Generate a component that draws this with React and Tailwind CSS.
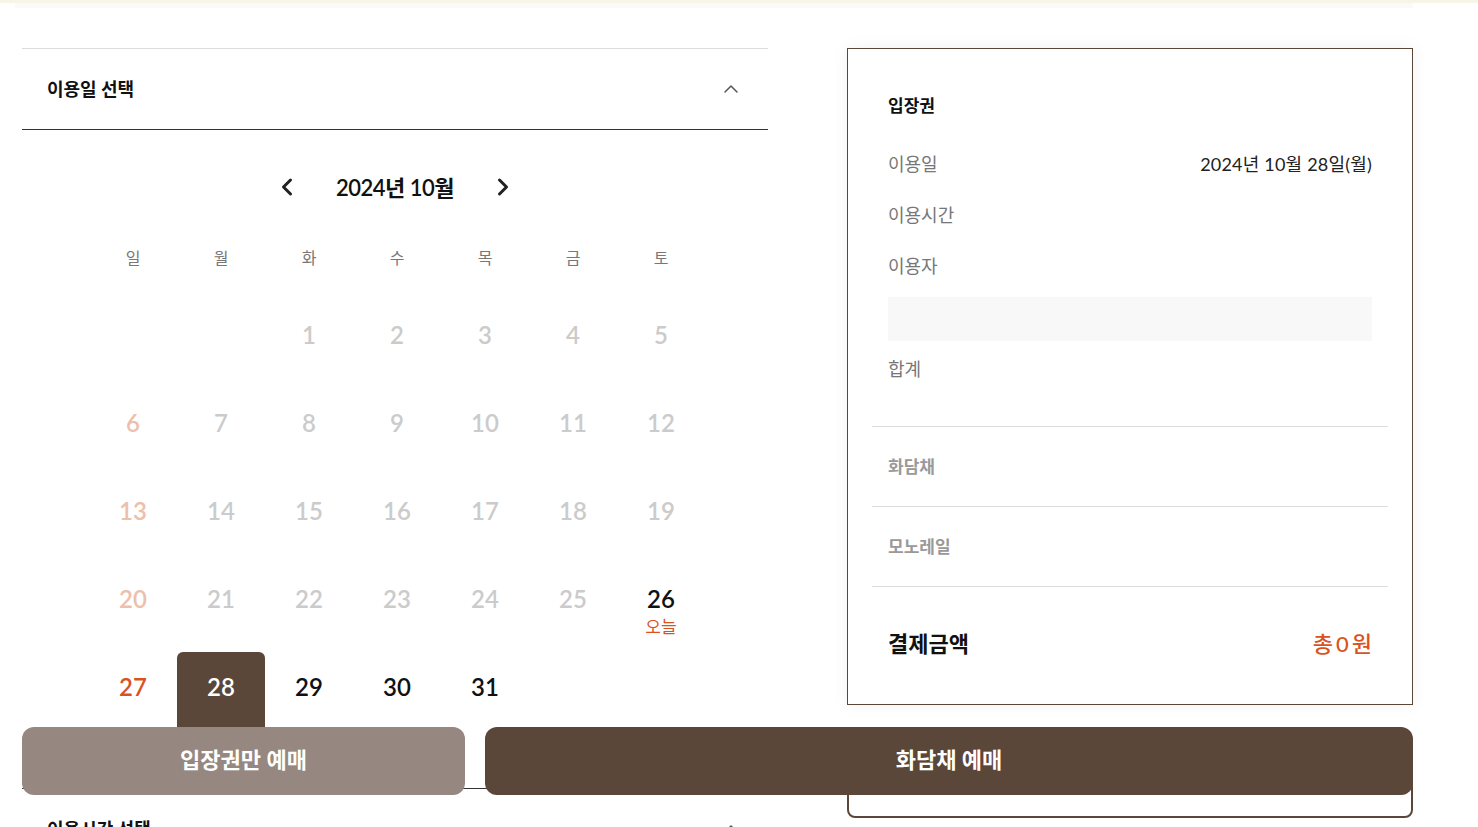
import { ChevronUp, ChevronLeft, ChevronRight } from 'lucide-react';

const WEEKDAYS = ['일', '월', '화', '수', '목', '금', '토'];

// October 2024 starts on Tuesday
const cells = [null, null, ...Array.from({ length: 31 }, (_, i) => i + 1)];

function dayColor(day, col) {
  if (day === 28) return 'text-white';
  if (day === 27) return 'text-[#d9531e]';
  if (day >= 26) return 'text-[#111]';
  if (col === 0) return 'text-[#ecc0aa]';
  return 'text-[#cbcbcb]';
}

function SectionHeader({ title }) {
  return (
    <div className="flex h-[80px] items-center justify-between pl-[25px] pr-[25px]">
      <h3 className="text-[18px] font-bold text-[#111]">{title}</h3>
      <ChevronUp size={24} strokeWidth={1.5} className="text-[#555]" />
    </div>
  );
}

function Calendar() {
  return (
    <div className="border-b border-[#333] pt-[37px] pb-[57px]">
      <div className="flex h-[40px] items-center justify-center gap-[30px]">
        <ChevronLeft size={28} strokeWidth={2.6} className="text-[#222]" />
        <span className="w-[128px] text-center text-[22px] font-semibold tracking-[-0.5px] text-[#111]">2024년 10월</span>
        <ChevronRight size={28} strokeWidth={2.6} className="text-[#222]" />
      </div>
      <div className="ml-[67px] mt-[39px] grid w-[616px] grid-cols-7">
        {WEEKDAYS.map((w) => (
          <div key={w} className="h-[24px] text-center text-[16px] leading-[24px] text-[#777]">{w}</div>
        ))}
      </div>
      <div className="ml-[67px] mt-[30px] grid w-[616px] grid-cols-7 gap-y-[9px]">
        {cells.map((day, i) => (
          <div
            key={i}
            className={
              'flex h-[79px] flex-col items-center pt-[21px] ' +
              (day === 28 ? 'rounded-t-[6px] bg-[#5a4739]' : '')
            }
          >
            {day && (
              <>
                <span className={'text-[24px] font-semibold leading-[28px] ' + dayColor(day, i % 7)}>{day}</span>
                {day === 26 && <span className="mt-[3px] text-[17px] leading-[22px] text-[#d9531e]">오늘</span>}
              </>
            )}
          </div>
        ))}
      </div>
    </div>
  );
}

function InfoRow({ label, value, className = '' }) {
  return (
    <div className={'flex h-[51px] items-center justify-between ' + className}>
      <span className="text-[18px] text-[#777]">{label}</span>
      {value && <span className="text-[18px] tracking-[0.2px] text-[#222]">{value}</span>}
    </div>
  );
}

function Summary() {
  return (
    <div>
      <div className="border border-[#5a4739] bg-white px-6 shadow-[0_0_16px_rgba(0,0,0,0.06)]">
        <div className="px-4 pt-[45px] pb-[31px]">
          <h4 className="h-[24px] text-[17px] font-bold leading-[24px] text-[#111]">입장권</h4>
          <div className="mt-[21px]">
            <InfoRow label="이용일" value="2024년 10월 28일(월)" />
            <InfoRow label="이용시간" />
            <InfoRow label="이용자" />
          </div>
          <div className="mt-[5px] h-[44px] bg-[#f8f8f8]" />
          <InfoRow label="합계" className="mt-[3px]" />
        </div>
        <div className="flex h-[80px] items-center border-t border-[#ddd] px-4">
          <span className="text-[17px] font-bold text-[#999]">화담채</span>
        </div>
        <div className="flex h-[80px] items-center border-t border-[#ddd] px-4">
          <span className="text-[17px] font-bold text-[#999]">모노레일</span>
        </div>
        <div className="flex h-[118px] items-center justify-between border-t border-[#ddd] px-4 pb-[4px]">
          <span className="text-[22px] font-bold text-[#111]">결제금액</span>
          <span className="text-[22px] font-medium text-[#d9531e]">
            총<span className="mx-[3px]">0</span>원
          </span>
        </div>
      </div>
      <div className="mt-[40px] h-[73px] rounded-b-[8px] border-2 border-[#5a4739]" />
    </div>
  );
}

export default function App() {
  return (
    <div className="min-h-screen bg-white font-[family-name:Lato,'Noto_Sans_CJK_KR',sans-serif]">
      <div className="h-[3px] bg-[#f7f4e8]" />
      <div className="ml-[15px] h-[5px] w-[1398px] bg-[#fafafa]" />

      <div className="mx-[22px] flex w-[1391px] gap-[79px] pt-[40px]">
        <div className="w-[746px]">
          <div className="border-t border-b border-t-[#ddd] border-b-[#333]">
            <SectionHeader title="이용일 선택" />
          </div>
          <Calendar />
          <SectionHeader title="이용시간 선택" />
        </div>
        <div className="w-[566px]">
          <Summary />
        </div>
      </div>

      <div className="fixed bottom-[32px] left-[22px] flex w-[1391px] gap-[20px]">
        <button className="h-[68px] w-[443px] rounded-[12px] bg-[#968880] pb-[3px] text-[22px] font-bold text-white">
          입장권만 예매
        </button>
        <button className="h-[68px] flex-1 rounded-[12px] bg-[#5a4739] pb-[3px] text-[22px] font-bold text-white">
          화담채 예매
        </button>
      </div>
    </div>
  );
}
